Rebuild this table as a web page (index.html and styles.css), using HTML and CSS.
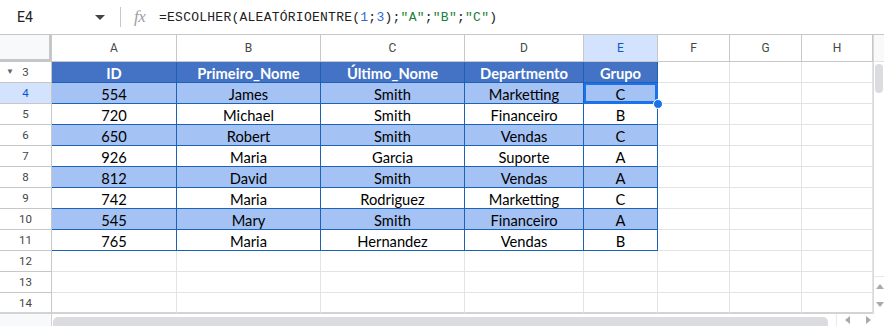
FILE: index.html
```html
<!DOCTYPE html>
<html>
<head>
<meta charset="utf-8">
<link rel="stylesheet" href="styles.css">
</head>
<body>
<div class="app">
  <div class="formula-bar">
    <div class="name-box">E4</div>
    <svg class="caret" width="10" height="6" viewBox="0 0 10 6"><path d="M0 0h10L5 5z" fill="#444"/></svg>
    <div class="sep"></div>
    <div class="fx">fx</div>
    <div class="formula">=ESCOLHER(ALEATÓRIOENTRE(<span class="num">1</span>;<span class="num">3</span>);<span class="str">"A"</span>;<span class="str">"B"</span>;<span class="str">"C"</span>)</div>
  </div>
  <div class="sheet">
    <div class="corner"></div>
    <div class="ch">A</div><div class="ch">B</div><div class="ch">C</div><div class="ch">D</div><div class="ch sel">E</div><div class="ch">F</div><div class="ch">G</div><div class="ch">H</div>
    <div class="vscroll">
      <div class="vs-top"></div>
      <div class="vs-track"><div class="vs-thumb"></div></div>
      <div class="vs-arrows">
        <svg width="8" height="5" viewBox="0 0 8 5"><path d="M0 5h8L4 0z" fill="#aaa"/></svg>
        <svg width="8" height="5" viewBox="0 0 8 5"><path d="M0 0h8L4 5z" fill="#aaa"/></svg>
      </div>
    </div>

    <div class="rh"><span class="tri">▼</span>3</div>
    <div class="c t th">ID</div><div class="c t th">Primeiro_Nome</div><div class="c t th">Último_Nome</div><div class="c t th">Departmento</div><div class="c t th">Grupo</div><div class="c"></div><div class="c"></div><div class="c"></div>

    <div class="rh sel">4</div>
    <div class="c t b">554</div><div class="c t b">James</div><div class="c t b">Smith</div><div class="c t b">Marketting</div><div class="c t b active">C<span class="handle"></span></div><div class="c"></div><div class="c"></div><div class="c"></div>

    <div class="rh">5</div>
    <div class="c t">720</div><div class="c t">Michael</div><div class="c t">Smith</div><div class="c t">Financeiro</div><div class="c t">B</div><div class="c"></div><div class="c"></div><div class="c"></div>

    <div class="rh">6</div>
    <div class="c t b">650</div><div class="c t b">Robert</div><div class="c t b">Smith</div><div class="c t b">Vendas</div><div class="c t b">C</div><div class="c"></div><div class="c"></div><div class="c"></div>

    <div class="rh">7</div>
    <div class="c t">926</div><div class="c t">Maria</div><div class="c t">Garcia</div><div class="c t">Suporte</div><div class="c t">A</div><div class="c"></div><div class="c"></div><div class="c"></div>

    <div class="rh">8</div>
    <div class="c t b">812</div><div class="c t b">David</div><div class="c t b">Smith</div><div class="c t b">Vendas</div><div class="c t b">A</div><div class="c"></div><div class="c"></div><div class="c"></div>

    <div class="rh">9</div>
    <div class="c t">742</div><div class="c t">Maria</div><div class="c t">Rodriguez</div><div class="c t">Marketting</div><div class="c t">C</div><div class="c"></div><div class="c"></div><div class="c"></div>

    <div class="rh">10</div>
    <div class="c t b">545</div><div class="c t b">Mary</div><div class="c t b">Smith</div><div class="c t b">Financeiro</div><div class="c t b">A</div><div class="c"></div><div class="c"></div><div class="c"></div>

    <div class="rh">11</div>
    <div class="c t">765</div><div class="c t">Maria</div><div class="c t">Hernandez</div><div class="c t">Vendas</div><div class="c t">B</div><div class="c"></div><div class="c"></div><div class="c"></div>

    <div class="rh">12</div>
    <div class="c"></div><div class="c"></div><div class="c"></div><div class="c"></div><div class="c"></div><div class="c"></div><div class="c"></div><div class="c"></div>

    <div class="rh">13</div>
    <div class="c"></div><div class="c"></div><div class="c"></div><div class="c"></div><div class="c"></div><div class="c"></div><div class="c"></div><div class="c"></div>

    <div class="rh last">14</div>
    <div class="c last"></div><div class="c last"></div><div class="c last"></div><div class="c last"></div><div class="c last"></div><div class="c last"></div><div class="c last"></div><div class="c last"></div>

    <div class="hscroll">
      <div class="hs-left"></div>
      <div class="hs-track"><div class="hs-thumb"></div></div>
      <div class="hs-arrows">
        <svg width="5" height="8" viewBox="0 0 5 8"><path d="M5 0v8L0 4z" fill="#aaa"/></svg>
        <svg width="5" height="8" viewBox="0 0 5 8"><path d="M0 0v8l5-4z" fill="#aaa"/></svg>
      </div>
    </div>
  </div>
</div>
</body>
</html>
```
FILE: styles.css
```css
* { box-sizing: border-box; }
html, body { margin: 0; padding: 0; background: #fff; }
.app { width: 884px; height: 326px; overflow: hidden; font-family: Roboto, "Liberation Sans", sans-serif; }

.formula-bar {
  height: 35px;
  display: flex;
  align-items: center;
  border-bottom: 1px solid #c7c7c7;
  position: relative;
}
.name-box { width: 92px; padding-left: 17px; font-size: 14px; color: #202124; }
.caret { margin-left: 3px; margin-top: 1px; }
.sep { width: 1px; height: 20px; background: #c7c7c7; margin-left: 15px; }
.fx { font-family: "Liberation Serif", serif; font-style: italic; font-size: 17px; color: #9aa0a6; margin-left: 13px; width: 24px; letter-spacing: -0.5px; }
.formula { font-family: "Liberation Mono", "DejaVu Sans Mono", monospace; font-size: 13px; color: #202124; margin-left: 1px; letter-spacing: 0.25px; }
.formula .num { color: #3367d6; }
.formula .str { color: #188038; }

.sheet {
  display: grid;
  grid-template-columns: 52px 125px 144px 144px 119px 74px 72px 72px 71px 11px;
  grid-template-rows: 27px repeat(12, 21px) 12px;
}
.corner {
  background: #f8f9fa;
  border-right: 3px solid #c7c7c7;
  border-bottom: 3px solid #c7c7c7;
}
.ch {
  display: flex; align-items: center; justify-content: center;
  font-size: 12px; color: #444746;
  border-right: 1px solid #c7c7c7;
  border-bottom: 1px solid #c7c7c7;
  background: #fff;
}
.ch.sel { background: #d3e3fd; color: #0b57d0; }
.rh {
  display: flex; align-items: center; justify-content: center;
  font-size: 11.5px; color: #444746;
  border-right: 1px solid #c7c7c7;
  border-bottom: 1px solid #c7c7c7;
  position: relative;
  background: #fff;
}
.rh.sel { background: #d3e3fd; color: #0b57d0; }
.rh.last { border-bottom: 2px solid #d3d3d3; }
.rh .tri { position: absolute; left: 6px; top: 5px; font-size: 8px; color: #5f6368; }

.c {
  border-right: 1px solid #e2e3e3;
  border-bottom: 1px solid #e2e3e3;
  background: #fff;
}
.c.last { border-bottom: 2px solid #d3d3d3; }
.c.t {
  display: flex; align-items: center; justify-content: center;
  font-family: Lato, "Open Sans", sans-serif;
  font-size: 14.7px;
  color: #000;
  border-right: 1px solid #1c63b7;
  border-bottom: 1px solid #1c63b7;
  padding-top: 1px;
}
.c.th { background: #4472c4; color: #fff; font-weight: 700; }
.c.b { background: #a4c2f4; }
.c.active { position: relative; box-shadow: inset 0 0 0 2px #1a73e8; border-color: #1a73e8; }
.handle {
  position: absolute; right: -6px; bottom: -6px;
  width: 10px; height: 10px; border-radius: 50%;
  background: #1a73e8; border: 1px solid #fff;
}

.vscroll {
  grid-column: 10; grid-row: 1 / 14;
  display: flex; flex-direction: column;
  border-left: 1px solid #d9d9d9;
  background: #fff;
}
.vs-top { height: 27px; background: #f8f9fa; border-bottom: 1px solid #e2e3e3; }
.vs-track { flex: 1; padding: 2px 1px 0 1px; }
.vs-thumb { width: 8px; height: 29px; border-radius: 4px; background: #dadce0; }
.vs-arrows { height: 38px; display: flex; flex-direction: column; align-items: center; justify-content: space-around; border-top: 1px solid #e8e8e8; padding-left: 1px; }

.hscroll {
  grid-column: 1 / 11; grid-row: 14;
  display: flex;
  background: #fff;
}
.hs-left { width: 52px; background: #f8f9fa; border-right: 1px solid #d3d3d3; }
.hs-track { width: 784px; padding: 3px 0 0 1px; }
.hs-thumb { width: 775px; height: 10px; border-radius: 5px 5px 0 0; background: #dadce0; }
.hs-arrows { display: flex; align-items: center; gap: 16px; padding-left: 8px; border-left: 1px solid #e8e8e8; }
```
